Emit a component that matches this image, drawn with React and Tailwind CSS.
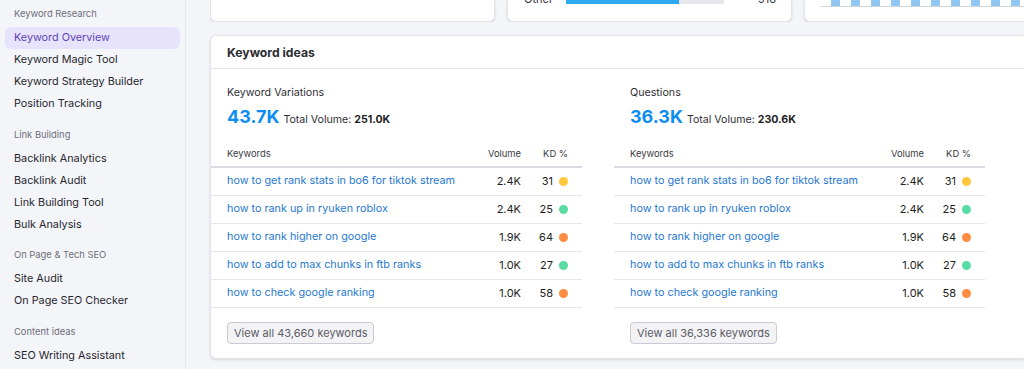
import React from "react";

const groups = [
  {
    title: "Keyword Research",
    items: ["Keyword Overview", "Keyword Magic Tool", "Keyword Strategy Builder", "Position Tracking"],
    gap: "",
  },
  {
    title: "Link Building",
    items: ["Backlink Analytics", "Backlink Audit", "Link Building Tool", "Bulk Analysis"],
    gap: "mt-[12px]",
  },
  { title: "On Page & Tech SEO", items: ["Site Audit", "On Page SEO Checker"], gap: "mt-[11px]" },
  { title: "Content ideas", items: ["SEO Writing Assistant"], gap: "mt-[12px]" },
];

const rows = [
  { kw: "how to get rank stats in bo6 for tiktok stream", vol: "2.4K", kd: 31, dot: "bg-[#ffc83d]" },
  { kw: "how to rank up in ryuken roblox", vol: "2.4K", kd: 25, dot: "bg-[#59dca4]" },
  { kw: "how to rank higher on google", vol: "1.9K", kd: 64, dot: "bg-[#ff8c42]" },
  { kw: "how to add to max chunks in ftb ranks", vol: "1.0K", kd: 27, dot: "bg-[#59dca4]" },
  { kw: "how to check google ranking", vol: "1.0K", kd: 58, dot: "bg-[#ff8c42]" },
];

const Sidebar = () => (
  <div className="w-[186px] shrink-0 border-r border-[#e6e7ee] bg-[#f4f5f9] pt-[6px]">
    {groups.map((g) => (
      <div key={g.title} className={g.gap}>
        <div className="h-[16px] pl-[14px] text-[9.4px] leading-[16px] text-[#6c6e79]">{g.title}</div>
        <div className="mt-[5px]">
          {g.items.map((it) => {
            const active = it === "Keyword Overview";
            return (
              <div
                key={it}
                className={
                  active
                    ? "mx-[5px] flex h-[22px] items-center rounded-md bg-[#e7e3fc] pl-[9px] text-[10.8px] text-[#5d44b8]"
                    : "mx-[5px] flex h-[22px] items-center pl-[9px] text-[10.8px] text-[#26272d]"
                }
              >
                {it}
              </div>
            );
          })}
        </div>
      </div>
    ))}
  </div>
);

const Table = ({ label, big, total, all }) => (
  <div className="w-[371px] shrink-0">
    <div className="px-4 pt-[17px]">
      <div className="text-[10.7px] leading-[14px] text-[#2f3036]">{label}</div>
      <div className="mt-[5px] flex h-[24px] items-baseline">
        <span className="text-[18px] font-bold leading-[24px] text-[#0d8df2]">{big}</span>
        <span className="ml-[4px] text-[10.6px] text-[#2f3036]">
          Total Volume: <b className="font-bold text-[#1d1e22]">{total}</b>
        </span>
      </div>
    </div>
    <div className="mt-[14px]">
      <div className="flex h-[25px] items-center border-b-2 border-[#dcdde4] pr-[14px] text-[9.4px] text-[#3a3b42]">
        <div className="flex-1 pl-4">Keywords</div>
        <div className="w-[60px] text-right">Volume</div>
        <div className="w-[47px] text-right">KD %</div>
      </div>
      {rows.map((r) => (
        <div key={r.kw} className="flex h-[28px] items-center border-b border-[#e6e7ec] pr-[14px]">
          <div className="flex-1 whitespace-nowrap pl-4 text-[10.8px] text-[#1f78d1]">{r.kw}</div>
          <div className="w-[60px] text-right text-[11px] text-[#1d1e22]">{r.vol}</div>
          <div className="flex w-[47px] items-center justify-end gap-[6px] text-[11px] text-[#1d1e22]">
            {r.kd}
            <span className={`h-[9px] w-[9px] rounded-full ${r.dot}`} />
          </div>
        </div>
      ))}
    </div>
    <div className="flex px-4 pt-[14px] pb-[14px]">
      <button className="h-[22px] rounded-[4px] border border-[#c9cad3] bg-[#f3f3f6] px-[6px] text-[11px] leading-[20px] text-[#5b5c66]">
        View all {all} keywords
      </button>
    </div>
  </div>
);

export default function App() {
  return (
    <div
      className="flex h-[369px] w-[1024px] overflow-hidden bg-[#f4f5f9]"
      style={{ fontFamily: "Inter, 'Noto Sans', sans-serif" }}
    >
      <Sidebar />
      <div className="min-w-0 flex-1 pl-[24px]">
        <div className="flex h-[22px] gap-[12px] overflow-hidden">
          <div className="w-[285px] shrink-0 rounded-b-md border border-t-0 border-[#e3e4ea] bg-white shadow-sm" />
          <div className="w-[285px] shrink-0 rounded-b-md border border-t-0 border-[#e3e4ea] bg-white shadow-sm">
            <div className="-mt-[8px] flex items-center pl-[16px] pr-[15px]">
              <span className="w-[42px] text-[11px] leading-[14px] text-[#2f3036]">Other</span>
              <div className="flex h-[10px] w-[158px]">
                <div className="w-[113px] bg-[#2eaaf5]" />
                <div className="flex-1 bg-[#e6e7ec]" />
              </div>
              <span className="flex-1 text-right text-[11px] leading-[14px] text-[#2f3036]">916</span>
            </div>
          </div>
          <div className="min-w-0 flex-1 rounded-bl-md border border-t-0 border-r-0 border-[#e3e4ea] bg-white pl-[15px] shadow-sm">
            <div className="flex h-[7px] gap-[11px] border-b border-[#d3d5dd] pl-[11px]">
              {Array.from({ length: 12 }).map((_, i) => (
                <div key={i} className="w-[9px] shrink-0 bg-[#8fc6f2]" />
              ))}
            </div>
          </div>
        </div>
        <div className="mt-[13px] rounded-l-md border border-r-0 border-[#e3e4ea] bg-white shadow-sm">
          <div className="flex h-[33px] items-center border-b border-[#e3e4ea] px-4 pt-[2px] text-[12.2px] font-bold text-[#2b2c31]">
            Keyword ideas
          </div>
          <div className="flex gap-[32px]">
            <Table label="Keyword Variations" big="43.7K" total="251.0K" all="43,660" />
            <Table label="Questions" big="36.3K" total="230.6K" all="36,336" />
          </div>
        </div>
      </div>
    </div>
  );
}
